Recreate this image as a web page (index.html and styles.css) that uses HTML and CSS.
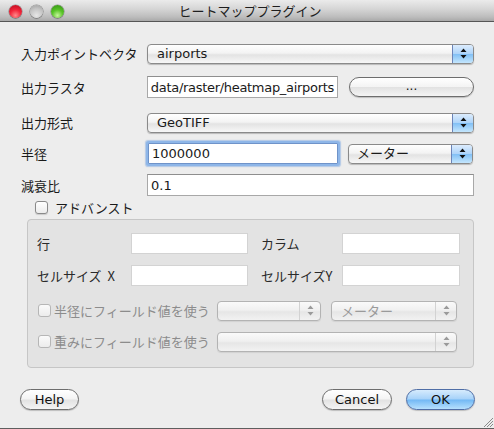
FILE: index.html
```html
<!DOCTYPE html>
<html lang="ja">
<head>
<meta charset="utf-8">
<title>ヒートマッププラグイン</title>
<link rel="stylesheet" href="styles.css">
</head>
<body>
<div class="window">
  <div class="titlebar">
    <div class="lights">
      <span class="light red"></span><span class="light gray"></span><span class="light green"></span>
    </div>
    <div class="title">ヒートマッププラグイン</div>
    <div></div>
  </div>

  <div class="content">
    <div class="row r1">
      <div class="lbl">入力ポイントベクタ</div>
      <div class="popup grow"><span class="ptext">airports</span><span class="parrow"><svg width="7" height="11" viewBox="0 0 7 11"><path d="M3.5 0.5 L6.5 4 L0.5 4 Z M0.5 7 L6.5 7 L3.5 10.5 Z" fill="#111"/></svg></span></div>
    </div>

    <div class="row r2">
      <div class="lbl">出力ラスタ</div>
      <div class="field f-out"><span class="tight">data/raster/heatmap_airports</span></div>
      <div class="btn btn-dots">...</div>
    </div>

    <div class="row r3">
      <div class="lbl">出力形式</div>
      <div class="popup grow"><span class="ptext">GeoTIFF</span><span class="parrow"><svg width="7" height="11" viewBox="0 0 7 11"><path d="M3.5 0.5 L6.5 4 L0.5 4 Z M0.5 7 L6.5 7 L3.5 10.5 Z" fill="#111"/></svg></span></div>
    </div>

    <div class="row r4">
      <div class="lbl">半径</div>
      <div class="field focus f-rad"><span class="left">1000000</span></div>
      <div class="popup unit"><span class="ptext">メーター</span><span class="parrow"><svg width="7" height="11" viewBox="0 0 7 11"><path d="M3.5 0.5 L6.5 4 L0.5 4 Z M0.5 7 L6.5 7 L3.5 10.5 Z" fill="#111"/></svg></span></div>
    </div>

    <div class="row r5">
      <div class="lbl">減衰比</div>
      <div class="field grow"><span class="left">0.1</span></div>
    </div>

    <div class="adv">
      <span class="check"></span><span class="adv-text">アドバンスト</span>
    </div>

    <div class="group">
      <div class="grow-row g1">
        <div class="glbl">行</div>
        <div class="field dim gf1"></div>
        <div class="glbl2">カラム</div>
        <div class="field dim gf2"></div>
      </div>
      <div class="grow-row g2">
        <div class="glbl">セルサイズ&nbsp;&nbsp;X</div>
        <div class="field dim gf1"></div>
        <div class="glbl2">セルサイズY</div>
        <div class="field dim gf2"></div>
      </div>
      <div class="grow-row g3">
        <div class="dcheck"><span class="check disabled"></span><span class="dtext">半径にフィールド値を使う</span></div>
        <div class="popup off pop-a"><span class="ptext"></span><span class="parrow"><svg width="7" height="11" viewBox="0 0 7 11"><path d="M3.5 0.5 L6.5 4 L0.5 4 Z M0.5 7 L6.5 7 L3.5 10.5 Z" fill="#9a9a9a"/></svg></span></div>
        <div class="popup off pop-b"><span class="ptext">メーター</span><span class="parrow"><svg width="7" height="11" viewBox="0 0 7 11"><path d="M3.5 0.5 L6.5 4 L0.5 4 Z M0.5 7 L6.5 7 L3.5 10.5 Z" fill="#9a9a9a"/></svg></span></div>
      </div>
      <div class="grow-row g4">
        <div class="dcheck"><span class="check disabled"></span><span class="dtext">重みにフィールド値を使う</span></div>
        <div class="popup off pop-c"><span class="ptext"></span><span class="parrow"><svg width="7" height="11" viewBox="0 0 7 11"><path d="M3.5 0.5 L6.5 4 L0.5 4 Z M0.5 7 L6.5 7 L3.5 10.5 Z" fill="#9a9a9a"/></svg></span></div>
      </div>
    </div>

    <div class="buttons">
      <div class="btn btn-help">Help</div>
      <div class="spacer"></div>
      <div class="btn btn-cancel">Cancel</div>
      <div class="btn btn-ok">OK</div>
    </div>
  </div>

  <svg class="grip" width="10" height="10" viewBox="0 0 10 10">
    <path d="M1 10 L10 1 M4 10 L10 4 M7 10 L10 7" stroke="#8a8a8a" stroke-width="1"/>
  </svg>
</div>
</body>
</html>
```

FILE: styles.css
```css
* { box-sizing: border-box; }

html, body {
  margin: 0;
  padding: 0;
  background: #ededed;
}

body {
  font-family: "DejaVu Sans", "Noto Sans CJK JP", sans-serif;
  font-size: 13px;
  color: #1a1a1a;
}

.window {
  position: relative;
  width: 494px;
  height: 429px;
  background: #ededed;
  border-bottom: 1px solid #5e5e5e;
  overflow: hidden;
}

/* title bar */
.titlebar {
  display: grid;
  grid-template-columns: 1fr auto 1fr;
  align-items: center;
  height: 22px;
  background: linear-gradient(#ebebeb, #d4d4d4 45%, #bdbdbd 80%, #a9a9a9);
  border-bottom: 1px solid #565656;
}

.lights {
  display: flex;
  gap: 8px;
  padding-left: 9px;
  padding-top: 1px;
}

.light {
  width: 13px;
  height: 13px;
  border-radius: 50%;
  box-shadow: 0 0 0 0.5px rgba(0,0,0,0.35), 0 1px 1px rgba(0,0,0,0.15);
}

.light.red {
  background: radial-gradient(circle at 50% 80%, #ff8a8a 0%, #f2263a 45%, #b5081c 100%);
}

.light.gray {
  background: radial-gradient(circle at 50% 80%, #e6e6e6 0%, #c4c4c4 55%, #9a9a9a 100%);
}

.light.green {
  background: radial-gradient(circle at 50% 80%, #c5f59a 0%, #58c427 45%, #2f8b12 100%);
}

.title {
  font-family: "Noto Sans CJK JP", sans-serif;
  font-size: 13px;
  color: #1e1e1e;
  padding-left: 6px;
  line-height: 21px;
}

/* content */
.content {
  display: flex;
  flex-direction: column;
  padding: 0 20px 0 21px;
}

.row {
  display: flex;
  align-items: center;
}

.r1 { margin-top: 21px; height: 21px; }
.r2 { margin-top: 12px; height: 22px; }
.r3 { margin-top: 14px; height: 21px; }
.r4 { margin-top: 10px; height: 21px; }
.r5 { margin-top: 10px; height: 22px; }

.lbl {
  width: 126px;
  flex: none;
  font-family: "Noto Sans CJK JP", sans-serif;
  font-size: 13px;
  color: #1a1a1a;
}

.grow { flex: 1; }

/* popup buttons */
.popup {
  display: flex;
  height: 20px;
  border: 1px solid #8a8a8a;
  border-radius: 4px;
  background: linear-gradient(#ffffff, #f3f3f3 45%, #e3e3e3 55%, #f7f7f7);
  box-shadow: 0 1px 1px rgba(0,0,0,0.22);
  overflow: hidden;
}

.ptext {
  flex: 1;
  padding-left: 9px;
  line-height: 18px;
  white-space: nowrap;
  font-family: "DejaVu Sans", "Noto Sans CJK JP", sans-serif;
  font-size: 13px;
}

.parrow {
  width: 21px;
  flex: none;
  display: flex;
  align-items: center;
  justify-content: center;
  border-left: 1px solid #6c84b8;
  background: linear-gradient(#dcecfd, #aed4f9 48%, #82c0f5 52%, #c4e6fd);
}

.popup.unit {
  width: 125px;
  margin-left: 10px;
}

.popup.unit .ptext { padding-left: 8px; }

/* text fields */
.field {
  display: flex;
  align-items: center;
  justify-content: flex-end;
  height: 22px;
  background: #fff;
  border: 1px solid #a8a8a8;
  border-top-color: #8e8e8e;
  overflow: hidden;
  white-space: nowrap;
  font-size: 13px;
}

.field span { padding-right: 4px; }
.field .left { padding-left: 3px; }
.field .tight { letter-spacing: -0.3px; padding-right: 3px; }
.field:has(.left) { justify-content: flex-start; }

.f-out { width: 191px; }

.f-rad {
  width: 190px;
  height: 21px;
  margin-left: 1px;
  border-color: #6f93c9;
  border-radius: 1px;
  box-shadow: 0 0 0 2px #8eb6e8, 0 0 1px 3px rgba(120,165,225,0.5);
}

/* push buttons */
.btn {
  display: flex;
  align-items: center;
  justify-content: center;
  height: 21px;
  border: 1px solid #6d6d6d;
  border-radius: 11px;
  background: linear-gradient(#ffffff, #f4f4f4 48%, #e2e2e2 52%, #f4f4f4);
  box-shadow: 0 1px 1px rgba(0,0,0,0.2);
  font-family: "DejaVu Sans", sans-serif;
  font-size: 13px;
  color: #111;
}

.btn-dots {
  width: 125px;
  height: 20px;
  margin-left: 11px;
  font-size: 12px;
  padding-bottom: 2px;
}

/* advanced checkbox */
.adv {
  display: flex;
  align-items: center;
  margin-top: 4px;
  height: 14px;
  padding-left: 14px;
}

.check {
  width: 13px;
  height: 13px;
  flex: none;
  border: 1px solid #8a8a8a;
  border-radius: 3px;
  background: linear-gradient(#ffffff, #ececec);
  box-shadow: 0 1px 1px rgba(0,0,0,0.15);
}

.adv-text {
  margin-left: 7px;
  font-family: "Noto Sans CJK JP", sans-serif;
  color: #1a1a1a;
}

/* group box */
.group {
  margin-top: 5px;
  margin-left: 6px;
  height: 149px;
  border: 1px solid #c6c6c6;
  border-radius: 4px;
  background: #e3e3e3;
  padding: 13px 0 0 9px;
  display: flex;
  flex-direction: column;
}

.grow-row {
  display: flex;
  align-items: center;
}

.g1 { height: 21px; }
.g2 { height: 21px; margin-top: 11px; }
.g3 { height: 21px; margin-top: 14px; }
.g4 { height: 21px; margin-top: 10px; }

.glbl {
  width: 94px;
  flex: none;
  font-family: "Noto Sans CJK JP", sans-serif;
  color: #2a2a2a;
}

.glbl2 {
  width: 81px;
  flex: none;
  margin-left: 13px;
  font-family: "Noto Sans CJK JP", sans-serif;
  color: #2a2a2a;
}

.field.dim {
  height: 21px;
  border: 1px solid #d3d3d3;
  box-shadow: none;
}

.gf1 { width: 117px; }
.gf2 { width: 118px; }

.dcheck {
  display: flex;
  align-items: center;
  width: 180px;
  flex: none;
  padding-left: 1px;
}

.check.disabled {
  border-color: #b6b6b6;
  background: linear-gradient(#fafafa, #ececec);
  box-shadow: none;
}

.dtext {
  margin-left: 3px;
  font-family: "Noto Sans CJK JP", sans-serif;
  color: #8c8c8c;
  white-space: nowrap;
}

.popup.off {
  border-color: #b3b3b3;
  background: linear-gradient(#fafafa, #f0f0f0 45%, #e6e6e6 55%, #f2f2f2);
  box-shadow: 0 1px 1px rgba(0,0,0,0.08);
}

.popup.off .parrow {
  border-left: 1px solid #d2d2d2;
  background: transparent;
}

.popup.off .ptext {
  color: #9a9a9a;
  font-family: "Noto Sans CJK JP", sans-serif;
}

.pop-a { width: 104px; }
.pop-b { width: 126px; margin-left: 10px; }
.pop-c { width: 240px; }

/* bottom buttons */
.buttons {
  display: flex;
  align-items: center;
  margin-top: 21px;
  height: 21px;
  margin-left: -1px;
  margin-right: -1px;
}

.spacer { flex: 1; }

.btn-help { width: 59px; }
.btn-cancel { width: 70px; }
.btn-ok {
  width: 69px;
  margin-left: 14px;
  border-color: #4f6ea6;
  background: linear-gradient(#d6ebfd, #a6d2f9 48%, #72b8f4 52%, #b6e0fd);
}

.grip {
  position: absolute;
  right: 1px;
  bottom: 1px;
}
```
